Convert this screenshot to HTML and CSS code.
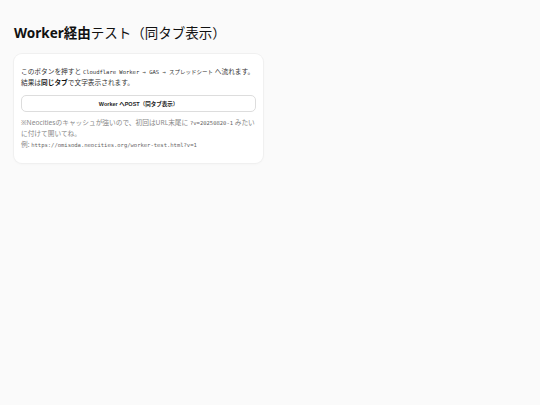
FILE: index.html
```html
<!DOCTYPE html>
<html lang="ja">
<head>
<meta charset="utf-8">
<link rel="stylesheet" href="styles.css">
</head>
<body>
<h1 class="title"><span class="title-bold">Worker経由</span><span class="title-light">テスト（同タブ表示）</span></h1>
<div class="card">
  <p class="lead">このボタンを押すと <code>Cloudflare Worker → GAS → スプレッドシート</code> へ流れます。<br>結果は<b>同じタブ</b>で文字表示されます。</p>
  <button class="btn" type="button">Worker へPOST（同タブ表示）</button>
  <p class="note">※Neocitiesのキャッシュが強いので、初回はURL末尾に <code>?v=20250820-1</code> みたいに付けて開いてね。<br>例: <code>https://omisoda.neocities.org/worker-test.html?v=1</code></p>
</div>
</body>
</html>
```
FILE: styles.css
```css
html, body {
  margin: 0;
  background: #fafafa;
}
body {
  padding: 24px 14px;
  font-family: "Noto Sans", "Noto Sans CJK JP", sans-serif;
  color: #222;
}
.title {
  margin: 0 0 12px;
  font-size: 13.5px;
  line-height: 18px;
  font-weight: 700;
  color: #111;
}
.title-light {
  font-weight: 400;
}
.card {
  width: 235px;
  padding: 12px 7px 13px;
  background: #fff;
  border-radius: 8px;
  box-shadow: 0 0 0 1px #f0f0f0, 0 1px 3px rgba(0,0,0,0.04);
}
.lead, .note {
  margin: 0;
  font-size: 6.7px;
  line-height: 11px;
}
.lead { color: #333; }
.lead b { font-weight: 700; color: #111; }
code {
  font-family: "DejaVu Sans Mono", "Noto Sans CJK JP", monospace;
  font-size: 5.5px;
  line-height: 1;
}
.btn {
  display: block;
  width: 100%;
  height: 17px;
  margin: 7px 0 5px;
  padding: 0;
  background: #fff;
  border: 1px solid #ddd;
  border-radius: 5px;
  font-family: "Liberation Sans", "Noto Sans CJK JP", sans-serif;
  font-size: 5.5px;
  font-weight: 700;
  color: #222;
}
.note {
  color: #888;
}
.note code { color: #666; }
```
